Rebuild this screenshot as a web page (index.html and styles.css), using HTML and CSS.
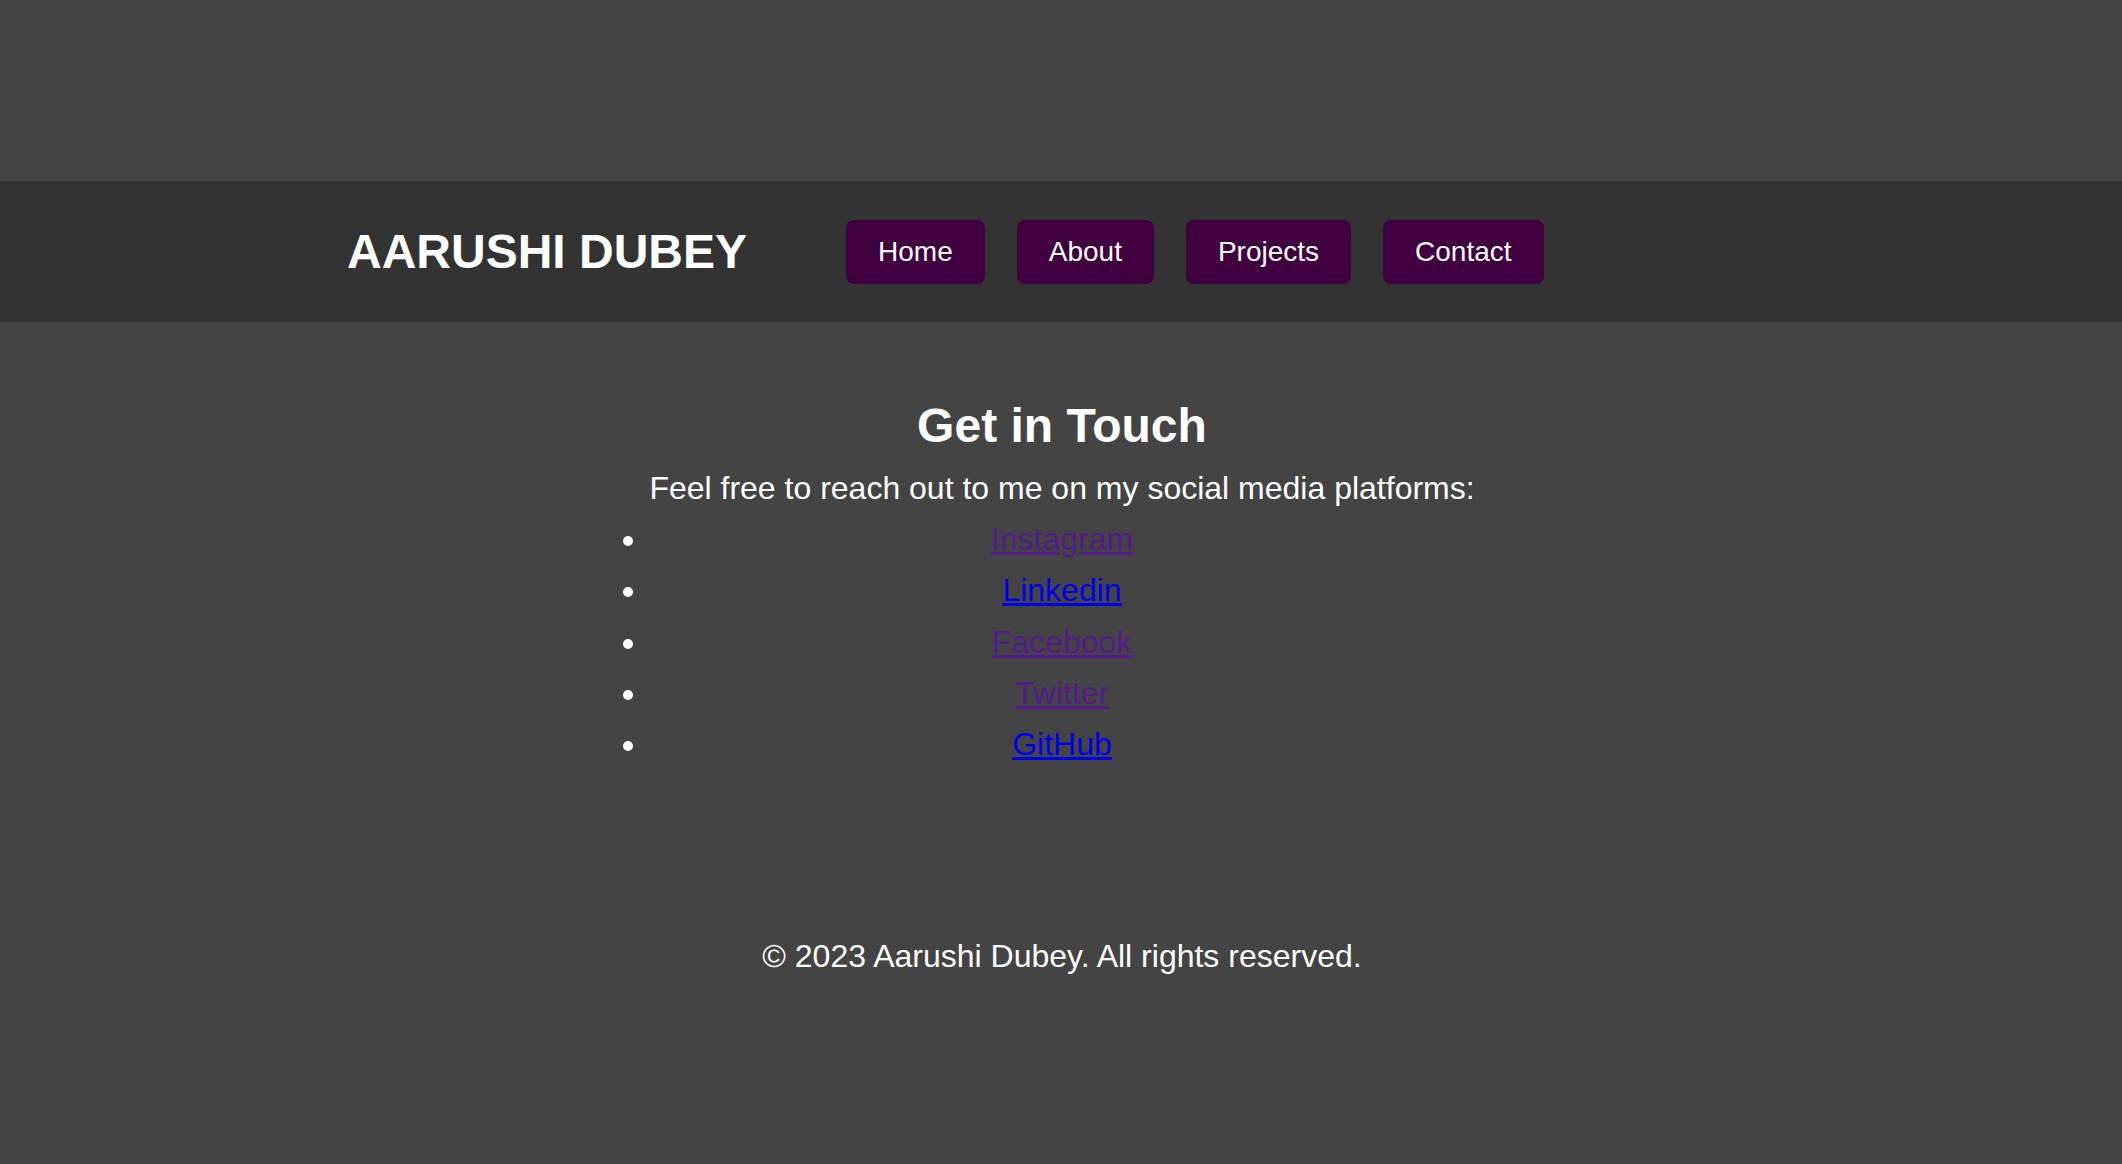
FILE: index.html
```html
<!DOCTYPE html>
<html lang="en">
<head>
<meta charset="utf-8">
<title>Aarushi Dubey - Contact</title>
<link rel="stylesheet" href="styles.css">
</head>
<body>
<div class="top-space"></div>
<header class="site-header">
  <h1 class="logo">AARUSHI DUBEY</h1>
  <nav class="nav">
    <a class="nav-btn" href="#">Home</a>
    <a class="nav-btn" href="#">About</a>
    <a class="nav-btn" href="#">Projects</a>
    <a class="nav-btn" href="#">Contact</a>
  </nav>
</header>
<main class="contact">
  <div class="contact-box">
    <h2 class="title">Get in Touch</h2>
    <p class="intro">Feel free to reach out to me on my social media platforms:</p>
    <ul class="links">
      <li><a class="visited" href="#">Instagram</a></li>
      <li><a class="fresh" href="#">Linkedin</a></li>
      <li><a class="visited" href="#">Facebook</a></li>
      <li><a class="visited" href="#">Twitter</a></li>
      <li><a class="fresh" href="#">GitHub</a></li>
    </ul>
  </div>
</main>
<footer class="footer">
  <p>© 2023 Aarushi Dubey. All rights reserved.</p>
</footer>
</body>
</html>
```

FILE: styles.css
```css
html, body {
  margin: 0;
  padding: 0;
}

body {
  background: #444444;
  color: #ffffff;
  font-family: "Liberation Sans", Arial, sans-serif;
  font-size: 32px;
  line-height: 1.6;
  min-height: 1164px;
}

.top-space {
  height: 181px;
}

.site-header {
  background: #333333;
  height: 141px;
  display: flex;
  align-items: center;
  padding-left: 347px;
  box-sizing: border-box;
}

.logo {
  margin: 0;
  font-size: 48px;
  font-weight: bold;
  line-height: 55px;
}

.nav {
  display: flex;
  gap: 32px;
  margin-left: 99px;
}

.nav-btn {
  display: block;
  background: #400040;
  color: #ffffff;
  text-decoration: none;
  font-size: 28px;
  line-height: 32px;
  padding: 16px 32px;
  border-radius: 8px;
}

.contact {
  padding-top: 66px;
  padding-left: 2px;
  text-align: center;
}

.contact-box {
  width: fit-content;
  margin: 0 auto;
}

.title {
  margin: 0;
  font-size: 48px;
  font-weight: bold;
  line-height: 75px;
}

.intro {
  margin: 0;
}

.links {
  margin: 0;
  padding: 0;
  list-style: disc outside;
}

.links li {
  text-align: center;
}

.links a.visited {
  color: #551a8b;
}

.links a.fresh {
  color: #0000ee;
}

.footer {
  text-align: center;
  margin-top: 161px;
  padding-left: 2px;
}

.footer p {
  margin: 0;
}
```
